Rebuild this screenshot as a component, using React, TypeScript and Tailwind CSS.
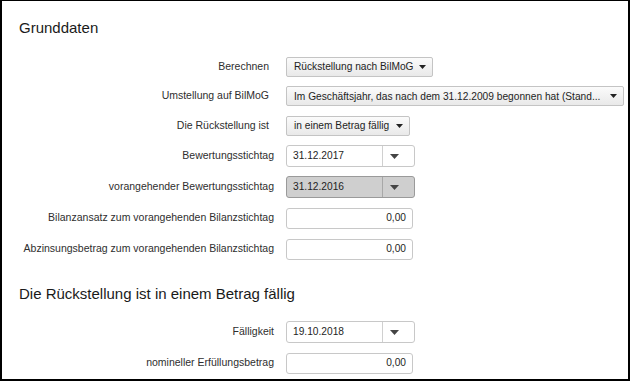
const font = { fontFamily: '"Liberation Sans", Arial, sans-serif' };

function Caret({ size = "sm" }: { size?: "sm" | "md" }) {
  return size === "sm" ? (
    <svg width="7" height="4" viewBox="0 0 7 4" className="shrink-0">
      <path d="M0 0h7L3.5 4z" fill="#222" />
    </svg>
  ) : (
    <svg width="9" height="5" viewBox="0 0 9 5" className="shrink-0">
      <path d="M0 0h9L4.5 5z" fill="#444" />
    </svg>
  );
}

function Row({
  label,
  select,
  children,
}: {
  label: string;
  select?: boolean;
  children: React.ReactNode;
}) {
  return (
    <div className={`flex items-center ${select ? "h-[29.5px]" : "h-[31px]"}`}>
      <div
        className={`w-[272px] shrink-0 text-right text-[10.5px] text-[#2e2e2e] ${
          select ? "pr-[5px]" : ""
        }`}
      >
        {label}
      </div>
      <div className="ml-[12px]">{children}</div>
    </div>
  );
}

function Select({ value, width }: { value: string; width: string }) {
  return (
    <div
      className={`${width} flex h-[20px] items-center justify-between gap-[4px] whitespace-nowrap rounded-[2px] border border-[#c4c4c4] bg-gradient-to-b from-[#fbfbfb] to-[#e9e9e9] pl-[7px] pr-[6px] text-[10.2px] text-[#1e1e1e]`}
    >
      <span>{value}</span>
      <Caret />
    </div>
  );
}

function DateBox({ value, disabled }: { value: string; disabled?: boolean }) {
  return (
    <div
      className={`flex h-[22px] w-[129px] rounded-[3px] border text-[10.2px] text-[#1e1e1e] ${
        disabled ? "border-[#9a9a9a] bg-[#cfcfcf]" : "border-[#c8c8c8] bg-white"
      }`}
    >
      <div className="flex flex-1 items-center pl-[6px]">{value}</div>
      <div
        className={`flex w-[32px] items-center border-l pl-[7px] ${
          disabled ? "border-[#a8a8a8]" : "border-[#d0d0d0]"
        }`}
      >
        <Caret size="md" />
      </div>
    </div>
  );
}

function Amount({ value }: { value: string }) {
  return (
    <div className="flex h-[21px] w-[127px] items-center justify-end rounded-[3px] border border-[#c8c8c8] bg-white pr-[6px] text-[10.2px] text-[#1e1e1e]">
      {value}
    </div>
  );
}

export default function App() {
  return (
    <div
      className="h-[381px] w-[630px] overflow-hidden border-2 border-t border-black bg-white"
      style={font}
    >
      {/* Grunddaten */}
      <h2 className="pl-[17px] pt-[18px] text-[15px] leading-[17px] text-[#1a1a1a]">
        Grunddaten
      </h2>

      <div className="mt-[16px]">
        <Row label="Berechnen" select>
          <Select value="Rückstellung nach BilMoG" width="w-[147px]" />
        </Row>
        <Row label="Umstellung auf BilMoG" select>
          <Select
            value="Im Geschäftsjahr, das nach dem 31.12.2009 begonnen hat (Stand..."
            width="w-[338px]"
          />
        </Row>
        <Row label="Die Rückstellung ist" select>
          <Select value="in einem Betrag fällig" width="w-[124px]" />
        </Row>
        <Row label="Bewertungsstichtag">
          <DateBox value="31.12.2017" />
        </Row>
        <Row label="vorangehender Bewertungsstichtag">
          <DateBox value="31.12.2016" disabled />
        </Row>
        <Row label="Bilanzansatz zum vorangehenden Bilanzstichtag">
          <Amount value="0,00" />
        </Row>
        <Row label="Abzinsungsbetrag zum vorangehenden Bilanzstichtag">
          <Amount value="0,00" />
        </Row>
      </div>

      {/* Fälligkeit */}
      <h2 className="mt-[20px] pl-[17px] text-[15px] leading-[17px] text-[#1a1a1a]">
        Die Rückstellung ist in einem Betrag fällig
      </h2>

      <div className="mt-[15px]">
        <Row label="Fälligkeit">
          <DateBox value="19.10.2018" />
        </Row>
        <Row label="nomineller Erfüllungsbetrag">
          <Amount value="0,00" />
        </Row>
      </div>
    </div>
  );
}
